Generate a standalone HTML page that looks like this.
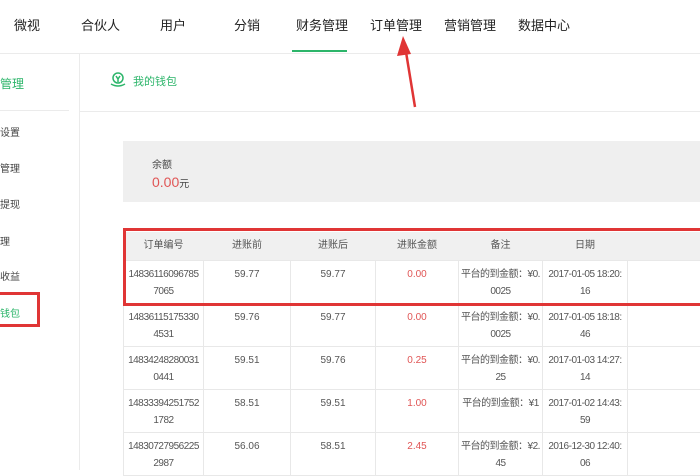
<!DOCTYPE html>
<html><head><meta charset="utf-8"><style>
*{margin:0;padding:0;box-sizing:border-box}
body{width:700px;height:470px;overflow:hidden;background:#fff;font-family:"Liberation Sans","Noto Sans CJK SC",sans-serif;position:relative;color:#333}
.a{position:absolute;white-space:nowrap}
.nav{font-size:13px;top:15px;color:#222}
.side{font-size:10px;color:#444;left:0}
table{position:absolute;left:123px;top:232px;border-collapse:collapse;font-size:10px;color:#555;table-layout:fixed;width:577px}
td{border:1px solid #e8e8e8;text-align:center;vertical-align:top;padding-top:5px;line-height:17px;height:43px;white-space:nowrap;overflow:hidden}
tr.h td{background:#f0f0f0;height:28px;border:none;padding-top:5px}
.r{color:#e05555}
.n{font-size:10px;letter-spacing:-0.5px}
</style></head><body>
<div class="a nav" style="left:14px">微视</div>
<div class="a nav" style="left:81px">合伙人</div>
<div class="a nav" style="left:160px">用户</div>
<div class="a nav" style="left:234px">分销</div>
<div class="a nav" style="left:296px">财务管理</div>
<div class="a nav" style="left:370px">订单管理</div>
<div class="a nav" style="left:444px">营销管理</div>
<div class="a nav" style="left:518px">数据中心</div>
<div class="a" style="left:292px;top:50px;width:55px;height:2px;background:#2cb56a"></div>
<div class="a" style="left:0;top:53px;width:700px;height:1px;background:#ebebeb"></div>
<div class="a" style="left:79px;top:54px;width:1px;height:416px;background:#ebebeb"></div>
<div class="a" style="left:0;top:110px;width:69px;height:1px;background:#ebebeb"></div>
<div class="a" style="left:80px;top:111px;width:620px;height:1px;background:#ebebeb"></div>
<div class="a" style="left:0;top:75px;font-size:12px;color:#2cb56a">管理</div>
<div class="a side" style="top:124px">设置</div>
<div class="a side" style="top:160px">管理</div>
<div class="a side" style="top:196px">提现</div>
<div class="a side" style="top:233px">理</div>
<div class="a side" style="top:268px">收益</div>
<div class="a side" style="top:305px;color:#2cb56a">钱包</div>
<div class="a" style="left:-4px;top:292px;width:44px;height:35px;border:3px solid #e03535"></div>
<svg class="a" style="left:109px;top:71px" width="18" height="18" viewBox="0 0 18 18" fill="none" stroke="#2cb56a" stroke-width="1.5"><circle cx="9" cy="7" r="5"/><path d="M2 13 Q9 17 16 13 M7 5 L9 8 L11 5 M9 8 V11"/></svg>
<div class="a" style="left:133px;top:73px;font-size:11px;color:#2cb56a">我的钱包</div>
<div class="a" style="left:123px;top:141px;width:577px;height:61px;background:#efefef"></div>
<div class="a" style="left:152px;top:156px;font-size:10px;color:#444">余额</div>
<div class="a" style="left:152px;top:174px;font-size:14px;color:#e05555">0.00<span style="font-size:10px;color:#444">元</span></div>
<table>
<colgroup><col style="width:80px"><col style="width:87px"><col style="width:85px"><col style="width:83px"><col style="width:84px"><col style="width:85px"><col style="width:73px"></colgroup>
<tr class="h"><td>订单编号</td><td>进账前</td><td>进账后</td><td>进账金额</td><td>备注</td><td>日期</td><td></td></tr>
<tr><td class="n">14836116096785<br>7065</td><td>59.77</td><td>59.77</td><td class="r">0.00</td><td class="n">平台的到金额：¥0.<br>0025</td><td class="n">2017-01-05 18:20:<br>16</td><td></td></tr>
<tr><td class="n">14836115175330<br>4531</td><td>59.76</td><td>59.77</td><td class="r">0.00</td><td class="n">平台的到金额：¥0.<br>0025</td><td class="n">2017-01-05 18:18:<br>46</td><td></td></tr>
<tr><td class="n">14834248280031<br>0441</td><td>59.51</td><td>59.76</td><td class="r">0.25</td><td class="n">平台的到金额：¥0.<br>25</td><td class="n">2017-01-03 14:27:<br>14</td><td></td></tr>
<tr><td class="n">14833394251752<br>1782</td><td>58.51</td><td>59.51</td><td class="r">1.00</td><td class="n">平台的到金额：¥1</td><td class="n">2017-01-02 14:43:<br>59</td><td></td></tr>
<tr><td class="n">14830727956225<br>2987</td><td>56.06</td><td>58.51</td><td class="r">2.45</td><td class="n">平台的到金额：¥2.<br>45</td><td class="n">2016-12-30 12:40:<br>06</td><td></td></tr>
</table>
<div class="a" style="left:123px;top:228px;width:580px;height:78px;border:3px solid #e03535"></div>
<svg class="a" style="left:0;top:0" width="700" height="470"><path d="M415 107 L406 52" stroke="#e03535" stroke-width="2.5"/><path d="M403 36 L397 56 L411 54 Z" fill="#e03535"/></svg>
</body></html>
